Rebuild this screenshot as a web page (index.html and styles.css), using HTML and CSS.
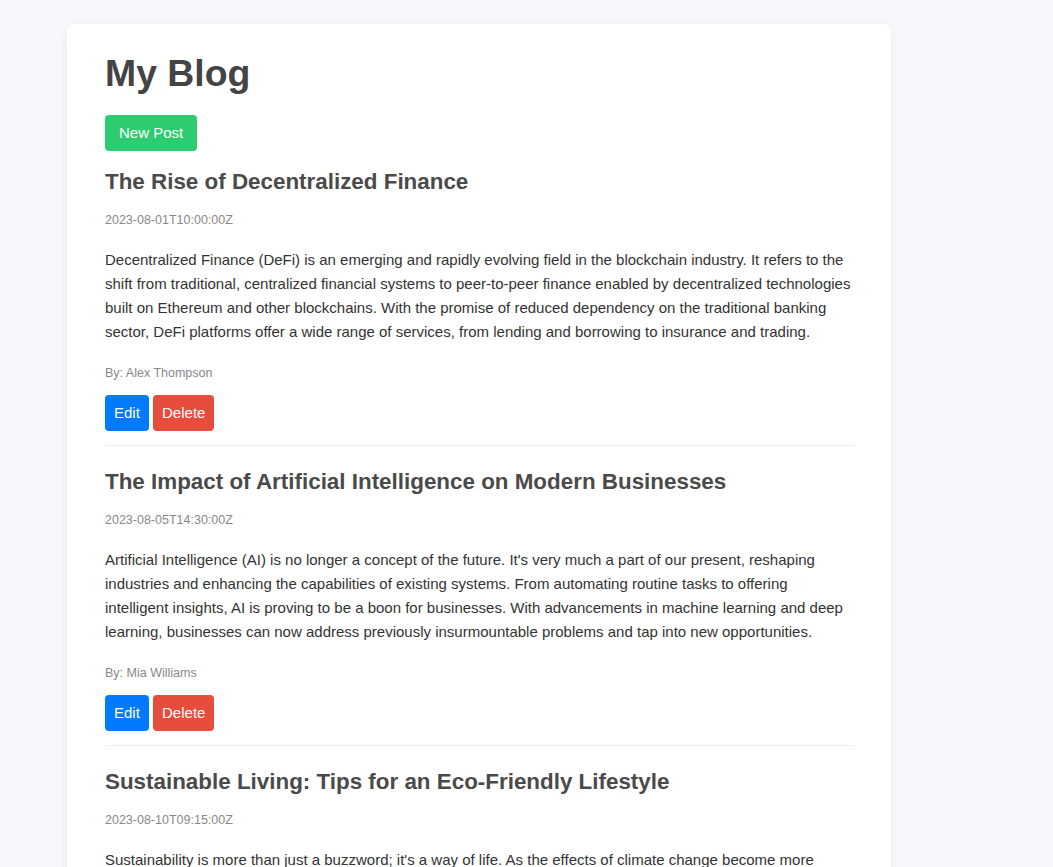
FILE: index.html
```html
<!DOCTYPE html>
<html lang="en">
<head>
<meta charset="utf-8">
<title>My Blog</title>
<link rel="stylesheet" href="styles.css">
</head>
<body>
<div class="container">
  <h1 class="title">My Blog</h1>
  <div class="toolbar"><button class="btn btn-new">New Post</button></div>

  <article class="post">
    <h2 class="post-title">The Rise of Decentralized Finance</h2>
    <p class="post-date">2023-08-01T10:00:00Z</p>
    <p class="post-content">Decentralized Finance (DeFi) is an emerging and rapidly evolving field in the blockchain industry. It refers to the shift from traditional, centralized financial systems to peer-to-peer finance enabled by decentralized technologies built on Ethereum and other blockchains. With the promise of reduced dependency on the traditional banking sector, DeFi platforms offer a wide range of services, from lending and borrowing to insurance and trading.</p>
    <p class="post-author">By: Alex Thompson</p>
    <div class="actions"><button class="btn btn-edit">Edit</button> <button class="btn btn-delete">Delete</button></div>
  </article>

  <article class="post">
    <h2 class="post-title">The Impact of Artificial Intelligence on Modern Businesses</h2>
    <p class="post-date">2023-08-05T14:30:00Z</p>
    <p class="post-content">Artificial Intelligence (AI) is no longer a concept of the future. It's very much a part of our present, reshaping industries and enhancing the capabilities of existing systems. From automating routine tasks to offering intelligent insights, AI is proving to be a boon for businesses. With advancements in machine learning and deep learning, businesses can now address previously insurmountable problems and tap into new opportunities.</p>
    <p class="post-author">By: Mia Williams</p>
    <div class="actions"><button class="btn btn-edit">Edit</button> <button class="btn btn-delete">Delete</button></div>
  </article>

  <article class="post">
    <h2 class="post-title">Sustainable Living: Tips for an Eco-Friendly Lifestyle</h2>
    <p class="post-date">2023-08-10T09:15:00Z</p>
    <p class="post-content">Sustainability is more than just a buzzword; it's a way of life. As the effects of climate change become more apparent, many individuals are looking for ways to reduce their carbon footprint. From minimizing waste and conserving energy to choosing local produce and sustainable products, small daily choices can add up to a significant positive impact on our planet.</p>
    <p class="post-author">By: Liam Johnson</p>
    <div class="actions"><button class="btn btn-edit">Edit</button> <button class="btn btn-delete">Delete</button></div>
  </article>
</div>
</body>
</html>
```
FILE: styles.css
```css
html, body {
  margin: 0;
  padding: 0;
}

body {
  background: #f7f8fc;
  font-family: "Liberation Sans", Arial, sans-serif;
  color: #333;
}

.container {
  width: 750px;
  margin: 24px 0 40px 67px;
  padding: 27px 36px 20px 38px;
  background: #ffffff;
  border-radius: 8px;
  box-shadow: 0 2px 12px rgba(0, 0, 0, 0.06);
}

.title {
  margin: 0 0 20px;
  font-size: 37.4px;
  line-height: 44px;
  font-weight: bold;
  color: #444;
}

.toolbar {
  margin-bottom: 17px;
  line-height: 0;
}

.btn {
  display: inline-block;
  border: none;
  border-radius: 4px;
  color: #fff;
  font-family: "Liberation Sans", Arial, sans-serif;
  font-size: 15px;
  line-height: 18px;
  padding: 9px 9px;
  margin: 0;
  cursor: pointer;
  vertical-align: top;
}

.btn-new {
  background: #2ecc71;
  padding: 9px 14px;
}

.btn-edit {
  background: #007bff;
}

.btn-delete {
  background: #e74c3c;
}

.post {
  padding-bottom: 14px;
  margin-bottom: 22px;
  border-bottom: 1px solid #eee;
}

.post-title {
  margin: 0 0 16px;
  font-size: 22.4px;
  line-height: 28px;
  font-weight: bold;
  color: #4a4a4a;
}

.post-date {
  margin: 0 0 20px;
  font-size: 12.5px;
  line-height: 16px;
  color: #888;
}

.post-content {
  margin: 0 0 21px;
  font-size: 15px;
  line-height: 24px;
  color: #333;
}

.post-author {
  margin: 0 0 14px;
  font-size: 12.5px;
  line-height: 16px;
  color: #888;
}

.actions {
  font-size: 15px;
  line-height: 36px;
  height: 36px;
}
```
